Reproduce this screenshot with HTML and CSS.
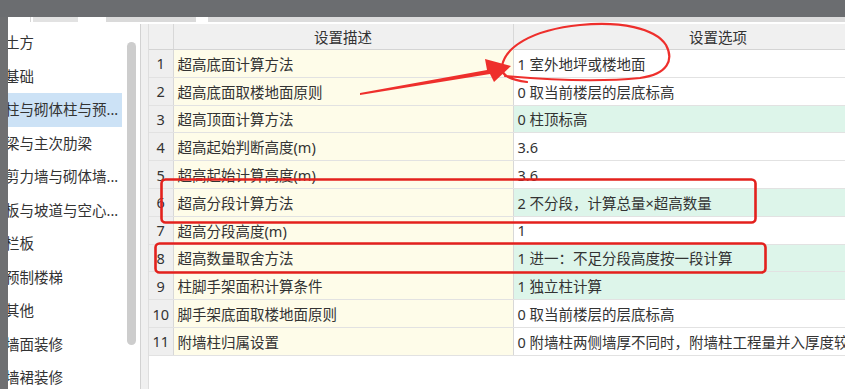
FILE: index.html
```html
<!DOCTYPE html>
<html lang="zh-CN">

<head>
    <meta charset="UTF-8">
    <title>超高设置</title>
    <link rel="stylesheet" href="styles.css">
</head>

<body>
    <div class="topbar"></div>

    <div class="frame">
        <div class="edge"></div>

        <div class="app">
            <!-- Tab strip -->
            <div class="tabstrip">
                <span class="tab tab-white"></span>
                <span class="tab tab-gray tab-a"></span>
                <span class="tab tab-white tab-b"></span>
                <span class="tab tab-gray tab-c"></span>
                <span class="tab tab-white tab-d"></span>
                <span class="tab tab-gray tab-rest"></span>
            </div>

            <div class="content">
                <!-- Category list -->
                <div class="side">
                    <ul class="cat-list">
                        <li>土方</li>
                        <li>基础</li>
                        <li class="active">柱与砌体柱与预...</li>
                        <li>梁与主次肋梁</li>
                        <li>剪力墙与砌体墙...</li>
                        <li>板与坡道与空心...</li>
                        <li>栏板</li>
                        <li>预制楼梯</li>
                        <li>其他</li>
                        <li>墙面装修</li>
                        <li>墙裙装修</li>
                    </ul>
                    <div class="scroll-track">
                        <div class="scroll-thumb"></div>
                    </div>
                </div>

                <div class="splitter"></div>

                <!-- Settings grid -->
                <div class="grid-wrap">
                    <table class="grid">
                        <colgroup>
                            <col class="col-no">
                            <col class="col-desc">
                            <col class="col-opt">
                        </colgroup>
                        <thead>
                            <tr>
                                <th></th>
                                <th>设置描述</th>
                                <th>设置选项</th>
                            </tr>
                        </thead>
                        <tbody>
                            <tr><td class="no">1</td><td class="desc">超高底面计算方法</td><td class="opt">1 室外地坪或楼地面</td></tr>
                            <tr><td class="no">2</td><td class="desc">超高底面取楼地面原则</td><td class="opt">0 取当前楼层的层底标高</td></tr>
                            <tr><td class="no">3</td><td class="desc">超高顶面计算方法</td><td class="opt changed">0 柱顶标高</td></tr>
                            <tr><td class="no">4</td><td class="desc">超高起始判断高度(m)</td><td class="opt">3.6</td></tr>
                            <tr><td class="no">5</td><td class="desc">超高起始计算高度(m)</td><td class="opt">3.6</td></tr>
                            <tr><td class="no">6</td><td class="desc">超高分段计算方法</td><td class="opt changed">2 不分段，计算总量×超高数量</td></tr>
                            <tr><td class="no">7</td><td class="desc">超高分段高度(m)</td><td class="opt">1</td></tr>
                            <tr><td class="no">8</td><td class="desc">超高数量取舍方法</td><td class="opt changed">1 进一：不足分段高度按一段计算</td></tr>
                            <tr><td class="no">9</td><td class="desc">柱脚手架面积计算条件</td><td class="opt changed">1 独立柱计算</td></tr>
                            <tr><td class="no">10</td><td class="desc">脚手架底面取楼地面原则</td><td class="opt">0 取当前楼层的层底标高</td></tr>
                            <tr><td class="no">11</td><td class="desc">附墙柱归属设置</td><td class="opt">0 附墙柱两侧墙厚不同时，附墙柱工程量并入厚度较大的墙</td></tr>
                        </tbody>
                    </table>
                </div>
            </div>
        </div>
    </div>

    <!-- Hand-drawn annotations on top of the screenshot -->
    <svg class="marks" width="845" height="389" viewBox="0 0 845 389">
        <path class="ink" d="M527,82 C512,80 500,76 502,66 C505,48 530,30 580,25 C620,21 655,28 666,45 C674,60 668,74 640,78 C600,82 550,80 505,76" />
        <polygon class="ink-fill" points="360,93 487,70 485,59 511,66 494,82 490,74 360,95" />
        <rect class="box" x="161.5" y="179.5" width="594" height="43" rx="4" />
        <rect class="box" x="155.5" y="243.5" width="610" height="29" rx="4" />
    </svg>
</body>

</html>
```

FILE: styles.css
```css
body {
    margin: 0;
    width: 845px;
    height: 389px;
    overflow: hidden;
    position: relative;
    background-color: #ffffff;
    color: #333333;
    font-family: "Noto Sans", "Noto Sans CJK SC", sans-serif;
    font-size: 14.5px;
}

.topbar {
    height: 17px;
    background-color: #6b6d70;
}

.frame {
    display: flex;
    height: 372px;
}

.edge {
    width: 8px;
    flex-shrink: 0;
    background-color: #6e6f71;
}

.app {
    flex: 1;
    display: flex;
    flex-direction: column;
    min-width: 0;
}

/* Tab strip */
.tabstrip {
    display: flex;
    height: 5px;
    margin-bottom: 2px;
    background-color: #ffffff;
}

.tab {
    height: 100%;
}

.tab-white {
    width: 22px;
    background-color: #ffffff;
    border-right: 1px solid #d6d6d6;
}

.tab-gray {
    background-color: #e2e2e2;
}

.tab-a {
    width: 45px;
    margin-left: 2px;
}

.tab-b {
    width: 28px;
    border-right: none;
}

.tab-c {
    width: 90px;
    background-color: #dadada;
}

.tab-d {
    width: 12px;
    border-right: none;
}

.tab-rest {
    flex: 1;
    background-color: #dcdcdc;
}

.content {
    flex: 1;
    display: flex;
    min-height: 0;
}

/* Category list */
.side {
    width: 132px;
    flex-shrink: 0;
    display: flex;
    overflow: hidden;
}

.cat-list {
    list-style-type: none;
    margin: 0;
    padding: 2px 5px 0 0;
    width: 114px;
    flex-shrink: 0;
    overflow: hidden;
}

.cat-list li {
    height: 33.5px;
    line-height: 33.5px;
    margin-left: -3px;
    padding-left: 0;
    white-space: nowrap;
    overflow: hidden;
}

.cat-list li.active {
    margin-left: 0;
    padding-left: 0;
    background-color: #cce2f6;
    text-indent: -3px;
}

.scroll-track {
    width: 13px;
    flex-shrink: 0;
}

.scroll-thumb {
    width: 9px;
    height: 303px;
    margin-top: 18px;
    border-radius: 5px;
    background-color: #cdcdcd;
}

.splitter {
    width: 7px;
    flex-shrink: 0;
    background-color: #f0f0f0;
    border-left: 1px solid #d2d2d2;
}

/* Settings grid */
.grid-wrap {
    flex: 1;
    overflow: hidden;
    border-left: 1px solid #dedede;
}

.grid {
    border-collapse: collapse;
    table-layout: fixed;
    width: 774px;
}

.col-no {
    width: 24px;
}

.col-desc {
    width: 340px;
}

.col-opt {
    width: 410px;
}

.grid th {
    height: 25px;
    padding: 0;
    font-weight: normal;
    background-color: #f0f0f0;
    border-bottom: 1px solid #d4d4d4;
    border-right: 1px solid #d8d8d8;
    text-align: center;
}

.grid td {
    height: 26.8px;
    padding: 0 0 0 4px;
    border-bottom: 1px solid #e2e2e2;
    white-space: nowrap;
    overflow: hidden;
}

.grid td.no {
    padding: 0;
    text-align: center;
    background-color: #efefef;
    border-right: 1px solid #d8d8d8;
}

.grid td.desc {
    background-color: #fefce9;
    border-right: 1px solid #d8d8d8;
}

.grid td.opt {
    background-color: #ffffff;
}

.grid td.changed {
    background-color: #ddf5ea;
}

/* Annotations */
.marks {
    position: absolute;
    left: 0;
    top: 0;
    pointer-events: none;
}

.ink {
    fill: none;
    stroke: #ee2f2c;
    stroke-width: 2.2;
    stroke-linecap: round;
}

.ink-fill {
    fill: #ee2f2c;
}

.box {
    fill: none;
    stroke: #e3211d;
    stroke-width: 2.6;
}
```
